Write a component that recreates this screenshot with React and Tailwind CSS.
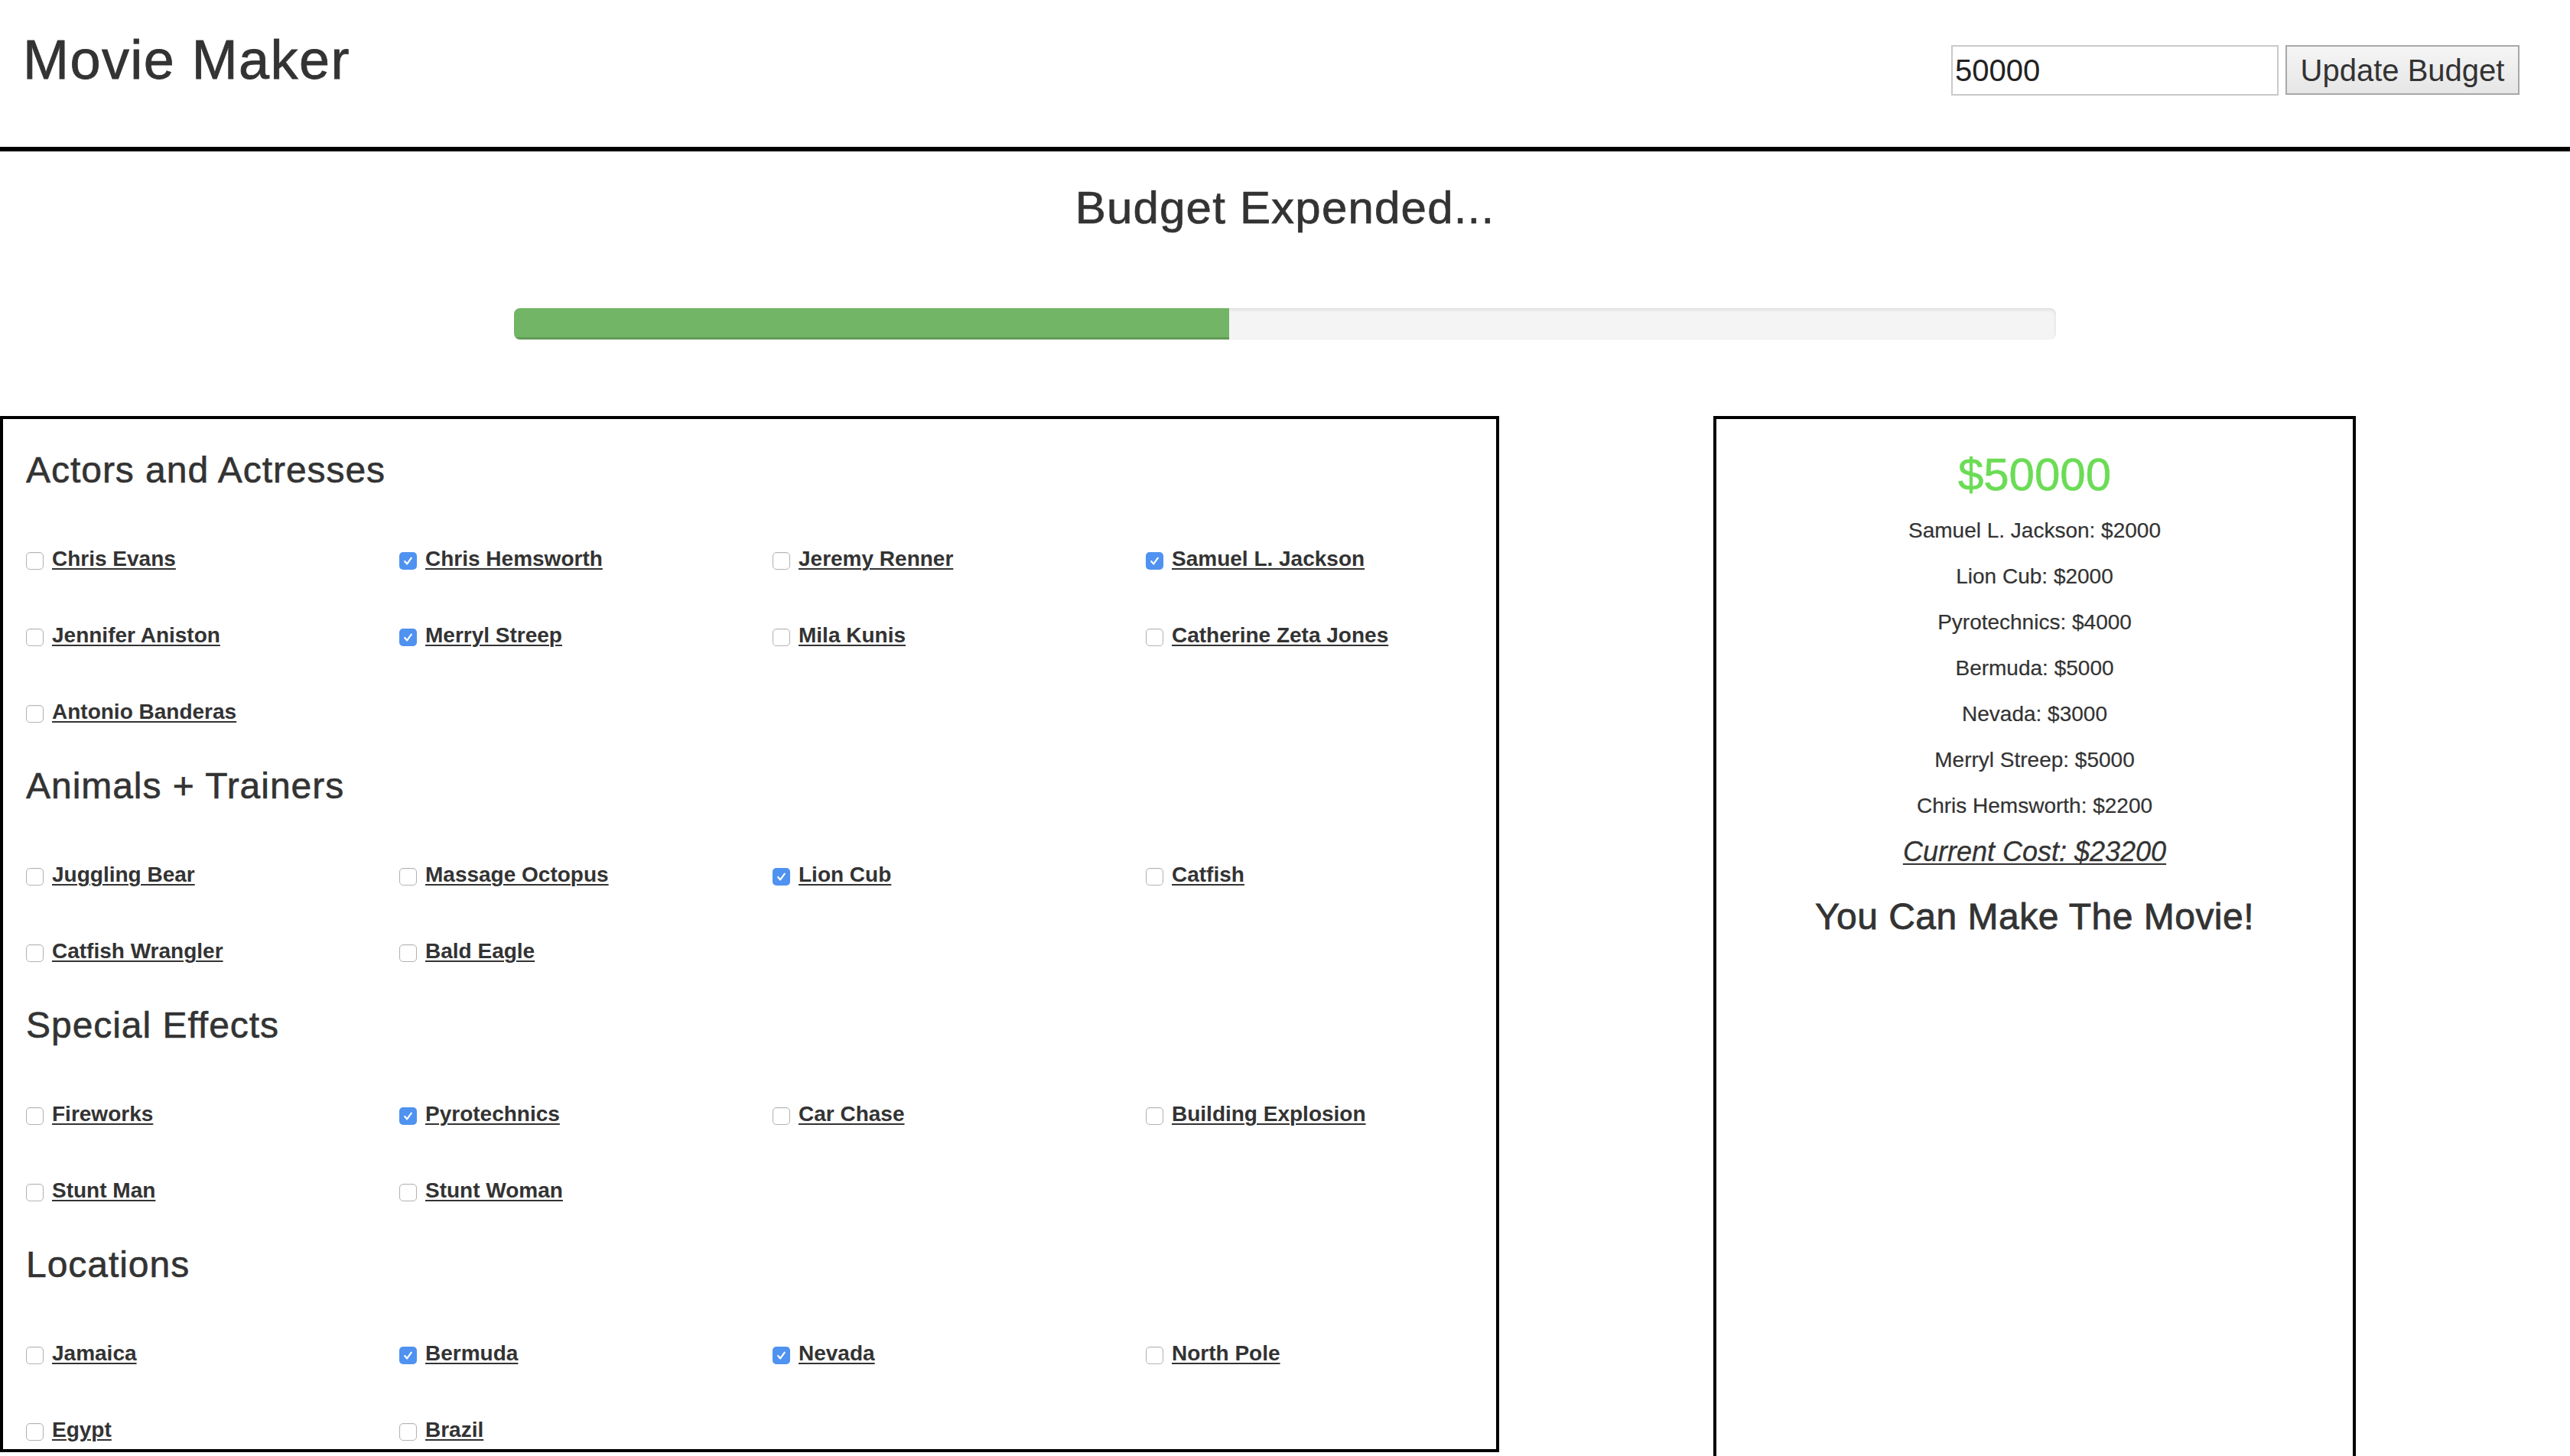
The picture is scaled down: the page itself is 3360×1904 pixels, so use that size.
import React from 'react';

const sections = [
  {
    title: 'Actors and Actresses',
    items: [
      ['Chris Evans', false], ['Chris Hemsworth', true], ['Jeremy Renner', false], ['Samuel L. Jackson', true],
      ['Jennifer Aniston', false], ['Merryl Streep', true], ['Mila Kunis', false], ['Catherine Zeta Jones', false],
      ['Antonio Banderas', false],
    ],
  },
  {
    title: 'Animals + Trainers',
    items: [
      ['Juggling Bear', false], ['Massage Octopus', false], ['Lion Cub', true], ['Catfish', false],
      ['Catfish Wrangler', false], ['Bald Eagle', false],
    ],
  },
  {
    title: 'Special Effects',
    items: [
      ['Fireworks', false], ['Pyrotechnics', true], ['Car Chase', false], ['Building Explosion', false],
      ['Stunt Man', false], ['Stunt Woman', false],
    ],
  },
  {
    title: 'Locations',
    items: [
      ['Jamaica', false], ['Bermuda', true], ['Nevada', true], ['North Pole', false],
      ['Egypt', false], ['Brazil', false],
    ],
  },
];

const picked = [
  ['Samuel L. Jackson', 2000],
  ['Lion Cub', 2000],
  ['Pyrotechnics', 4000],
  ['Bermuda', 5000],
  ['Nevada', 3000],
  ['Merryl Streep', 5000],
  ['Chris Hemsworth', 2200],
];

const budget = 50000;

function Box({ on }) {
  if (on) {
    return (
      <span className="mt-[4px] flex h-[23px] w-[23px] shrink-0 items-center justify-center rounded-[5px] bg-[#4f92f0]">
        <svg width="15" height="15" viewBox="0 0 15 15">
          <path d="M3.2 8 L6.2 11.4 L11.8 3.6" stroke="#fff" strokeWidth="2.2" fill="none" strokeLinecap="round" strokeLinejoin="round" />
        </svg>
      </span>
    );
  }
  return (
    <span className="mt-[4px] h-[23px] w-[23px] shrink-0 rounded-[5px] border border-[#b3b3b3] bg-white shadow-[inset_0_1px_2px_rgba(0,0,0,0.06)]" />
  );
}

function Section({ title, items }) {
  return (
    <div className="pt-[20px]">
      <h3 className="mb-[40px] px-[30px] text-[48px] leading-[53px] font-medium tracking-[0.02em] [-webkit-text-stroke:0.6px_#333]">
        {title}
      </h3>
      <div className="grid grid-cols-4">
        {items.map(([name, on]) => (
          <label key={name} className="flex h-[100px] items-center px-[30px]">
            <Box on={on} />
            <span className="ml-[11px] text-[28px] font-bold underline decoration-[2px] underline-offset-[3px]">
              {name}
            </span>
          </label>
        ))}
      </div>
    </div>
  );
}

export default function App() {
  const cost = picked.reduce((s, p) => s + p[1], 0);
  return (
    <div className="min-h-screen bg-white text-[#333] font-['Liberation_Sans',Arial,sans-serif]">
      <header className="flex h-[198px] items-start justify-between border-b-[6px] border-black">
        <h1 className="mt-[39px] ml-[30px] text-[72px] leading-[79px] font-medium tracking-[0.02em] [-webkit-text-stroke:0.8px_#333]">
          Movie Maker
        </h1>
        <div className="mt-[59px] mr-[66px] flex items-start">
          <input
            defaultValue="50000"
            className="h-[66px] w-[428px] border-2 border-[#c9c9c9] pl-[3px] text-[40px] text-[#222] outline-none"
          />
          <button className="ml-[9px] h-[65px] w-[306px] border-2 border-[#a8a8a8] bg-gradient-to-b from-[#f5f5f5] to-[#e6e6e6] text-[40px] text-[#333]">
            Update Budget
          </button>
        </div>
      </header>

      <h2 className="mt-[41px] text-center text-[60px] leading-[66px] font-medium tracking-[0.02em] [-webkit-text-stroke:0.7px_#333]">
        Budget Expended...
      </h2>

      <div className="mx-auto mt-[98px] h-[41px] w-3/5 overflow-hidden rounded-[8px] bg-[#f4f4f4] shadow-[inset_0_2px_4px_rgba(0,0,0,0.1)]">
        <div
          className="h-full bg-[#72b566] shadow-[inset_0_-3px_0_rgba(0,0,0,0.15)]"
          style={{ width: `${(cost / budget) * 100}%` }}
        />
      </div>

      <div className="mt-[100px] flex items-start">
        <div className="h-[1355px] w-[1960px] overflow-hidden border-4 border-black pt-[20px]">
          {sections.map((s) => (
            <Section key={s.title} title={s.title} items={s.items} />
          ))}
        </div>

        <div className="ml-[280px] h-[1420px] w-[840px] border-4 border-black px-[30px] pt-[40px] text-center">
          <h2 className="text-[60px] leading-[66px] font-medium text-[#6bdc55] [-webkit-text-stroke:0.6px_#6bdc55]">${budget}</h2>
          <div className="mt-[20px]">
            {picked.map(([n, v]) => (
              <p key={n} className="mb-[20px] text-[28px] leading-[40px] [-webkit-text-stroke:0.2px_#333]">
                {n}: ${v}
              </p>
            ))}
          </div>
          <h4 className="text-[36px] leading-[40px] font-medium italic underline decoration-[2px] underline-offset-[3px] [-webkit-text-stroke:0.3px_#333]">
            Current Cost: ${cost}
          </h4>
          <h3 className="mt-[38px] text-[48px] leading-[53px] font-medium tracking-[0.01em] [-webkit-text-stroke:0.8px_#333]">
            You Can Make The Movie!
          </h3>
        </div>
      </div>
    </div>
  );
}
